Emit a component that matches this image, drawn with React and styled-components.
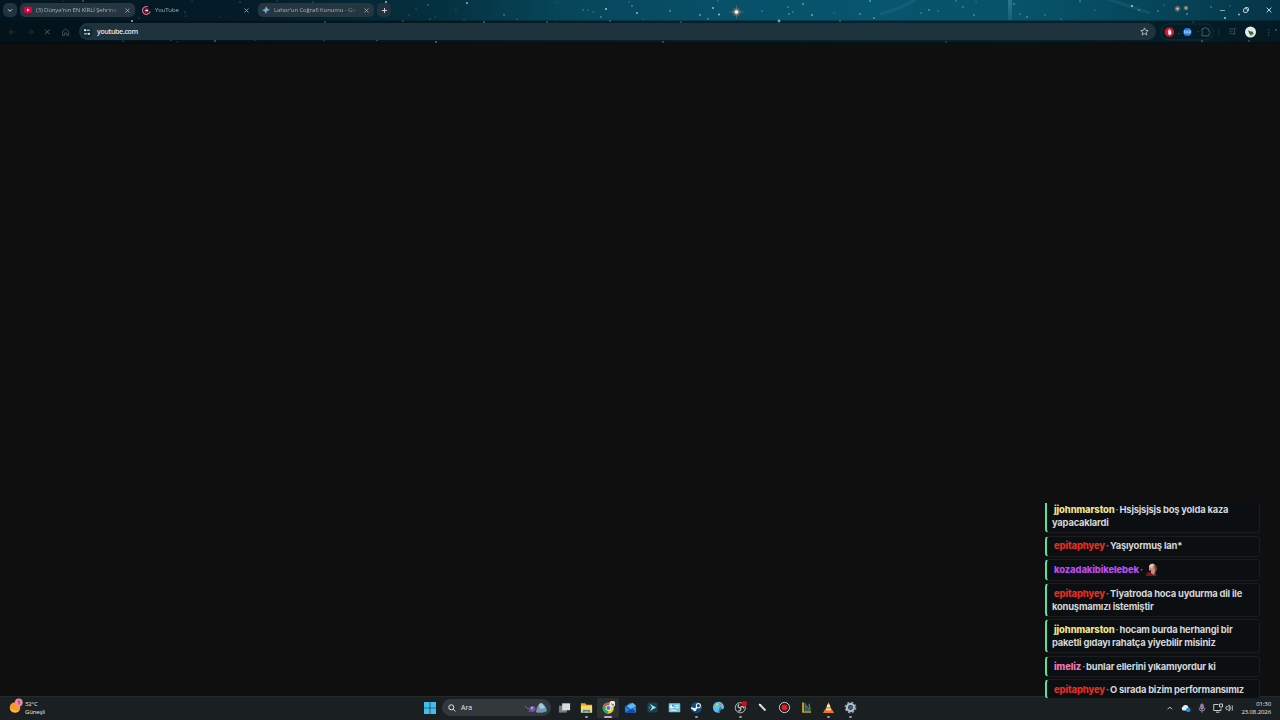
import React from 'react';
import styled, { createGlobalStyle } from 'styled-components';

const messages = [
  { user: 'jjohnmarston', color: '#eee58c', lines: ['Hsjsjsjsjs boş yolda kaza', 'yapacaklardi'], h: 34 },
  { user: 'epitaphyey', color: '#e63022', lines: ['Yaşıyormuş lan*'], h: 21 },
  { user: 'kozadakibikelebek', color: '#bd4df0', lines: [], emote: true, h: 22 },
  { user: 'epitaphyey', color: '#e63022', lines: ['Tiyatroda hoca uydurma dil ile', 'konuşmamızı istemiştir'], h: 34 },
  { user: 'jjohnmarston', color: '#eee58c', lines: ['hocam burda herhangi bir', 'paketli gıdayı rahatça yiyebilir misiniz'], h: 34 },
  { user: 'imeliz', color: '#f078bd', lines: ['bunlar ellerini yıkamıyordur ki'], h: 21 },
  { user: 'epitaphyey', color: '#e63022', lines: ['O sırada bizim performansımız'], h: 20 },
];

// x, y, radius, opacity
const stars = [
  [22, 2, 0.5, 0.4], [63, 1, 0.5, 0.4], [83, 1, 0.8, 0.6], [132, 21, 1, 0.9], [139, 18, 0.6, 0.5],
  [123, 41, 0.6, 0.6], [171, 40, 0.7, 0.6], [177, 42, 0.6, 0.4], [185, 12, 0.6, 0.6], [186, 16, 0.5, 0.5],
  [192, 1, 0.6, 0.4], [215, 41, 0.8, 0.7], [220, 17, 0.5, 0.4], [240, 2, 0.6, 0.6], [255, 40, 0.6, 0.5],
  [277, 1, 0.6, 0.5], [313, 2, 0.6, 0.6], [325, 22, 0.8, 0.5], [324, 40, 0.7, 0.5], [377, 40, 0.8, 0.6],
  [386, 2, 1, 0.9], [403, 21, 0.7, 0.5], [409, 15, 0.6, 0.5], [416, 9, 0.6, 0.5], [428, 5, 0.7, 0.6],
  [430, 19, 0.6, 0.6], [435, 17, 0.5, 0.4], [436, 42, 0.9, 0.5], [456, 10, 0.5, 0.5], [464, 20, 0.6, 0.5],
  [467, 3, 0.9, 0.9], [484, 22, 0.8, 0.7], [504, 15, 0.8, 0.6], [517, 19, 0.6, 0.6], [547, 22, 0.7, 0.6],
  [555, 23, 0.6, 0.5], [557, 2, 0.5, 0.4], [583, 10, 0.7, 0.6], [588, 10, 0.6, 0.7], [593, 12, 0.6, 0.7],
  [601, 17, 0.7, 0.8], [606, 9, 1, 0.9], [610, 21, 0.7, 0.7], [629, 2, 0.6, 0.6], [632, 6, 0.7, 0.8],
  [637, 13, 1, 0.8], [643, 19, 0.5, 0.5], [670, 11, 0.8, 0.8], [681, 22, 0.7, 0.6], [700, 15, 1, 0.6],
  [708, 19, 0.8, 0.7], [713, 8, 1, 0.8], [719, 14.5, 1, 0.9], [718, 1, 0.6, 0.7], [762, 11, 0.7, 0.6],
  [779, 21, 1.4, 0.7], [788, 7, 0.7, 0.7], [789, 14, 0.8, 0.7], [793, 12, 0.7, 0.6], [803, 4, 0.9, 0.6],
  [812, 15, 0.9, 0.7], [834, 13, 0.6, 0.5], [840, 21, 0.7, 0.7], [860, 14, 0.8, 0.7], [870, 1, 0.8, 0.9],
  [874, 18, 0.8, 0.8], [921, 13, 0.7, 0.6], [929, 10, 0.8, 0.8], [938, 11, 0.6, 0.8], [663, 42, 0.9, 0.4],
  [946, 42, 0.8, 0.4], [956, 1, 0.7, 0.6], [963, 7, 0.7, 0.7], [974, 15, 0.8, 0.7], [976, 2, 0.6, 0.6],
  [1014, 4, 0.7, 0.8], [1020, 14, 0.8, 0.6], [1027, 17, 0.8, 0.7], [1045, 15, 0.7, 0.6], [1061, 19, 0.6, 0.7],
  [1080, 1, 0.7, 0.7], [1095, 10, 0.5, 0.7], [1132, 6, 1, 1], [1139, 10, 0.7, 0.7], [1158, 11, 0.7, 0.8],
  [1164, 5, 0.6, 0.6], [1187, 14, 0.8, 0.8], [1193, 22, 0.6, 0.6], [1202, 41, 0.9, 0.5], [1211, 7, 0.7, 0.7],
  [1225, 18, 1, 0.9], [1230, 6, 0.6, 0.6], [1239, 14.5, 0.9, 0.9], [1249, 41, 0.8, 0.5], [1276, 30, 0.8, 0.6],
];

const Cross = ({ size = 5 }) => (
  <svg width={size} height={size} viewBox="0 0 6 6" stroke="currentColor" strokeWidth="0.9">
    <path d="M.6.6 5.4 5.4M5.4.6.6 5.4" />
  </svg>
);

const NightSky = () => (
  <Sky viewBox="0 0 1280 44">
    <defs>
      <radialGradient id="glow">
        <stop offset="0" stopColor="#ffe9c9" />
        <stop offset="0.4" stopColor="#e0a070" stopOpacity="0.6" />
        <stop offset="1" stopColor="#a98d70" stopOpacity="0" />
      </radialGradient>
      <linearGradient id="beam" x2="0" y2="1">
        <stop offset="0" stopColor="#7ac0cf" stopOpacity="0.32" />
        <stop offset="1" stopColor="#7ac0cf" stopOpacity="0.12" />
      </linearGradient>
    </defs>
    <path d="M880 14 Q900 9 915 0M1105-2 1150 13" stroke="#459cb0" strokeOpacity=".16" strokeWidth="3" fill="none" />
    <rect x="1008" width="4" height="20" fill="url(#beam)" />
    {stars.map(([x, y, r, o]) => (
      <circle key={`${x}-${y}`} cx={x} cy={y} r={r} fill="#a9d8dc" opacity={o} />
    ))}
    <circle cx="736.5" cy="12" r="5" fill="url(#glow)" />
    <path d="M736.5 5v14M729 12h15" stroke="#cfa889" strokeOpacity=".45" strokeWidth=".6" />
    <circle cx="736.5" cy="12" r="1.8" fill="#fff2da" />
    <circle cx="1177.5" cy="8.7" r="3.6" fill="url(#glow)" />
    <circle cx="1186" cy="8" r="3" fill="url(#glow)" />
  </Sky>
);

const Tools = () => (
  <ToolIcons viewBox="0 0 120 20" fill="none">
    <rect x="1" y="2" width="52.5" height="16" rx="8" stroke="#123340" strokeWidth=".8" />
    <path d="M7.4 5.5h4L14 8.2v3.8l-2.6 2.7h-4l-2.6-2.7V8.2z" fill="#d3132d" />
    <path d="M8.1 9.5h2.9v2.2l-1 1H9zM8.5 9.5V7.7M9.6 9.5V7.2M10.7 9.5V7.9" fill="#fff" stroke="#fff" strokeWidth=".7" />
    <circle cx="27.4" cy="10" r="4.1" fill="#247de5" />
    <path d="M27.4 10c-.8-1-1.3-1.3-1.8-1.3a1.2 1.2 0 0 0 0 2.5c.5 0 1-.3 1.8-1.2s1.3-1.3 1.8-1.3a1.2 1.2 0 0 1 0 2.5c-.5 0-1-.3-1.8-1.2z" stroke="#d9eaff" strokeWidth=".8" />
    <path d="M18 11.5h1M20.5 11.5h1M37.5 9.7h1.5" stroke="#31515b" />
    <path d="M42 6.8h2a1.4 1.4 0 0 1 2.8 0h2v2.5a1.3 1.3 0 0 1 0 2.6v2H42v-2.4a1.3 1.3 0 0 0 0-2.2z" stroke="#465e68" strokeWidth="1" />
    <path d="M58.8 7v6" stroke="#163743" />
    <path d="M69 6.7h5M69 9h4M69 11.3h2.7M74.5 12V6.8h2" stroke="#344f5a" strokeWidth=".9" />
    <circle cx="73.6" cy="12" r="1.1" fill="#344f5a" />
    <circle cx="90.5" cy="10" r="5.5" fill="#e2ece7" />
    <path d="m88 8 2.3 1.6 1.700-.4 1.600 2-1.100 2.100-2 .3-1.500-2.600z" fill="#3c5b45" />
    <path d="M90.500 13l3-.8" stroke="#7eb35e" strokeWidth="1" />
    <path d="M108.7 7v1M108.7 9.7v1M108.7 12.4v1" stroke="#48616c" strokeWidth="1.1" />
  </ToolIcons>
);

const appIcons = {
  taskview: (
    <>
      <rect x="1" y="5" width="8.5" height="7.5" fill="#777c80" />
      <rect x="4.5" y="2.5" width="8.5" height="7.5" fill="#d9dcde" />
    </>
  ),
  files: (
    <>
      <path d="M1 2.5h4.5L7 4h6v8.5H1z" fill="#e9a925" />
      <path d="M1 5h12v7.5H1z" fill="#ffd85b" />
      <path d="M3 9.5h8v3H3z" fill="#368dce" />
      <path d="M5 11.3h4v1.2H5z" fill="#e8c65b" />
    </>
  ),
  chrome: (
    <>
      <circle cx="6.8" cy="7.6" r="6" fill="#f6c928" />
      <path d="M6.8 7.6 1.6 4.6a6 6 0 0 1 10.4 0z" fill="#e34a3c" />
      <path d="M6.8 7.6 1.6 4.6a6 6 0 0 0 5.2 9z" fill="#36a852" />
      <circle cx="6.8" cy="7.6" r="2.9" fill="#fff" />
      <circle cx="6.8" cy="7.6" r="2.2" fill="#3682e5" />
      <circle cx="11.2" cy="3.1" r="3.3" fill="#e5ece7" />
      <path d="m9.5 2.2 2.3 1.5 1.3-.7-.8 2-1.5-.3z" fill="#45684e" />
    </>
  ),
  mail: (
    <>
      <path d="m1 6 6-4.5L13 5v7.2H1z" fill="#2461bd" />
      <path d="M3 5.5 9.5 2l3.5 3-5.5 4z" fill="#61b9ef" />
      <path d="m1 6.5 6 3.8 6-4.8v6.8H2z" fill="#1f86e3" />
      <path d="M1 12.3 9 8l4 4.3z" fill="#174b9b" />
    </>
  ),
  filmora: (
    <>
      <rect x="1.5" y="1.5" width="11" height="11" rx="2" fill="#1b3f4f" />
      <path d="m4 3 3.500 2L11 7l-3.500 2L4 11l2.500-4z" fill="#8cece0" />
      <path d="m3 5.500 2 1.500-2 1.500z" fill="#3e97a0" />
    </>
  ),
  panel: (
    <>
      <rect x=".8" y="2.3" width="12.4" height="9.8" rx=".8" fill="#73c8ed" />
      <circle cx="4.2" cy="6" r="2.1" fill="#eefaff" />
      <path d="M4.2 6V3.9A2.1 2.1 0 0 1 6.3 6z" fill="#367cb5" />
      <path d="M8 5h3.5M8 7h3.5M3 10h7" stroke="#edf9ff" />
      <path d="M10 8v3" stroke="#eaa341" strokeWidth="1.4" />
    </>
  ),
  steam: (
    <>
      <circle cx="7" cy="7" r="6" fill="#174a76" />
      <path d="m1.3 7.5 4 1.8L8.2 6" stroke="#e8f3fa" strokeWidth="2" fill="none" />
      <circle cx="9" cy="5" r="2.2" stroke="#e8f3fa" strokeWidth="1.1" fill="#174a76" />
      <circle cx="5.1" cy="9.5" r="1.6" fill="#e8f3fa" />
    </>
  ),
  paint: (
    <>
      <path d="M1 7a6 6 0 0 1 12-.5c0 2.500-2 2.500-3.500 2.500-1.500 0-1.500 1-1 2 .3 1.200-.8 1.800-2.300 1.700A6 6 0 0 1 1 7z" fill="#58bfe7" />
      <circle cx="5.5" cy="3.9" r="1.2" fill="#f1d65a" />
      <circle cx="9" cy="3.9" r="1.2" fill="#e6734c" />
      <circle cx="3.7" cy="6.8" r="1.2" fill="#83d376" />
      <path d="m9.500 6.500-2 6" stroke="#287bb5" strokeWidth="1.8" />
    </>
  ),
  obs: (
    <>
      <circle cx="6.8" cy="7.3" r="5.5" fill="#24272a" stroke="#d0d2d3" strokeWidth=".9" />
      <path d="M6.5 7.5C3.6 7 4 4.5 5.5 3.8M7 7.2c1.2-2.3 3.5-1 3.8.8M6.8 7.5c1.4 2.1-.6 3.9-2.4 3" stroke="#c5c7c8" strokeWidth="1.3" fill="none" />
      <circle cx="11.2" cy="2.8" r="2.8" fill="#d90716" />
    </>
  ),
  pen: (
    <>
      <path d="m4.2 4 6 6.2" stroke="#d8dcde" strokeWidth="2.2" />
      <path d="m3.4 3.2 1.6 1.6" stroke="#f8f8f8" strokeWidth="1.8" />
    </>
  ),
  record: (
    <>
      <circle cx="7" cy="7" r="5.5" fill="#191c1d" stroke="#dfdfdf" strokeWidth="1" />
      <circle cx="7" cy="7" r="3.2" fill="#ef1722" />
    </>
  ),
  ruler: (
    <>
      <path d="M2.2 1.5h2.4v9.5H12v1.7H2.2z" fill="#c69a36" />
      <path d="M5.4 2v8.5h6.4z" fill="#247d75" />
      <path d="M7 7v2h2z" fill="#182d2d" />
      <path d="m9.5 3 1.6 6" stroke="#b58949" />
    </>
  ),
  vlc: (
    <>
      <path d="M3 9.5h8l2 3.3H1z" fill="#e8791c" />
      <path d="M7 1 3.4 10.2Q7 12 10.6 10.2z" fill="#f58a24" />
      <path d="m5.9 3.8-.9 2.3q2 1 4 0l-.9-2.3zM4.4 7.7l-.5 1.5q3.1 1.6 6.2 0l-.5-1.5Q7 9.2 4.4 7.7z" fill="#edebe6" />
    </>
  ),
  settings: (
    <>
      <circle cx="7" cy="7" r="5.4" fill="none" stroke="#8799a3" strokeWidth="1.9" strokeDasharray="2.5 1.74" />
      <circle cx="7" cy="7" r="3.8" fill="none" stroke="#b4bfc5" strokeWidth="2.3" />
      <circle cx="7" cy="7" r="2.2" fill="#2a6099" />
    </>
  ),
};

// running: small dot below the icon, active: wider highlighted bar
const apps = [
  ['taskview'], ['files', 'running'], ['chrome', 'active'], ['mail'], ['filmora'], ['panel'],
  ['steam', 'running'], ['paint'], ['obs', 'running'], ['pen'], ['record'], ['ruler'], ['vlc', 'running'], ['settings', 'running'],
];

export default function App() {
  return (
    <Desktop>
      <GlobalStyle />
      <Browser>
        <NightSky />
        <TabStrip>
          <RoundButton>
            <svg width="6" height="5" viewBox="0 0 6 5" fill="none" stroke="currentColor"><path d="m1 1.3 2 2 2-2" /></svg>
          </RoundButton>
          <Tab $width={115} $gap={3} $filled>
            <svg width="8" height="8" viewBox="0 0 8 8"><rect y=".8" width="8" height="6.3" rx="1.8" fill="#e4003c" /><path d="m3 2.5 2.7 1.5L3 5.5z" fill="#fff" /></svg>
            <TabTitle $spacing={-0.13}>(3) Dünya'nın EN KİRLİ Şehrine</TabTitle>
            <Cross />
          </Tab>
          <Tab $width={116} $gap={3}>
            <svg width="9" height="9" viewBox="0 0 9 9" fill="none"><circle cx="4.5" cy="4.5" r="2.2" fill="#d80f40" /><path d="M5.8.8a3.9 3.9 0 1 0 2.4 4.6" stroke="#e56e93" strokeWidth="1.1" /><path d="M3.5 4.5H6" stroke="#fff" strokeWidth="1.2" /></svg>
            <TabTitle $spacing={-0.15}>YouTube</TabTitle>
            <Cross />
          </Tab>
          <Tab $width={116} $gap={4} $filled>
            <svg width="8" height="8" viewBox="0 0 8 8"><path d="M4 0q.7 3.3 4 4-3.3.7-4 4-.7-3.3-4-4Q3.3 3.3 4 0z" fill="#4b94f2" /><path d="M4 0q.7 3.3 4 4H4z" fill="#a1c768" /><path d="M0 4h4v4Q3.3 4.7 0 4z" fill="#64bad0" /></svg>
            <TabTitle $spacing={-0.11}>Lahor'un Coğrafi Konumu - Go</TabTitle>
            <Cross />
          </Tab>
          <RoundButton $left={3}>
            <svg width="7" height="7" viewBox="0 0 7 7" stroke="currentColor"><path d="M3.5 1v5M1 3.5h5" /></svg>
          </RoundButton>
          <WindowControls>
            <svg width="7" height="7" viewBox="0 0 7 7" stroke="#8badb8"><path d="M1 3.5h5" /></svg>
            <svg width="6" height="6" viewBox="0 0 6 6" stroke="currentColor" fill="none" strokeWidth=".9"><rect x=".6" y="1.7" width="3.7" height="3.7" rx=".6" /><path d="M2 .6h2.7q.7 0 .7.7V4" /></svg>
            <Cross size={6} />
          </WindowControls>
        </TabStrip>
        <Toolbar>
          <NavIcons viewBox="0 0 76 16" fill="none" stroke="#42545d" strokeWidth=".9">
            <path d="M15 8H9.5M12 5.3 9.3 8l2.7 2.7" stroke="#402d37" />
            <path d="M27.5 8H33M30.5 5.3 33.2 8l-2.7 2.7" stroke="#21333c" />
            <path d="m45 5.6 4.6 4.6M49.6 5.6 45 10.2" stroke="#56666e" />
            <path d="M62.5 7.4 65.6 5l3.1 2.4v4h-2V9h-2.2v2.4h-2z" />
          </NavIcons>
          <AddressBar>
            <SiteInfo viewBox="0 0 12 12" fill="none">
              <circle cx="6" cy="6" r="6" fill="#102a36" />
              <path d="M3 4.2h1.5M5.5 4.2H9M3 7.8h3.5M8 7.8h1" stroke="#dce5e9" strokeWidth="1" />
              <circle cx="4" cy="4.2" r="1.1" fill="#dce5e9" />
              <circle cx="7.9" cy="7.8" r="1.1" fill="#dce5e9" />
            </SiteInfo>
            <Address>youtube.com</Address>
            <svg width="9" height="9" viewBox="0 0 10 10" fill="none" stroke="#c4d0d5" strokeWidth=".9"><path d="m5 1 1.2 2.7 2.9.3-2.2 1.9.7 2.9L5 7.3 2.4 8.8l.7-2.9L.9 4l2.9-.3z" /></svg>
          </AddressBar>
          <Tools />
        </Toolbar>
      </Browser>

      <PageArea />

      <Taskbar>
        <Weather>
          <svg width="15" height="16" viewBox="0 0 15 16">
            <circle cx="6" cy="9.5" r="5.3" fill="#f59b25" />
            <path d="M1 10a5.3 5.3 0 0 0 9.5 2Q5 14 1 10z" fill="#ffc247" />
            <circle cx="9.8" cy="4.5" r="3.9" fill="#ef87a8" />
            <path d="m9 3.6 1.1-.8v3.7" stroke="#592437" fill="none" strokeWidth=".8" />
          </svg>
          <WeatherText>
            <span>32°C</span>
            <span>Güneşli</span>
          </WeatherText>
        </Weather>
        <Center>
          <svg width="12" height="12" viewBox="0 0 12 12" fill="#42bdec"><path d="M0 0h5.7v5.7H0zM6.3 0H12v5.7H6.3zM0 6.3h5.7V12H0zM6.3 6.3H12V12H6.3z" /></svg>
          <Search>
            <svg width="8" height="8" viewBox="0 0 8 8" fill="none" stroke="#e3e6e7" strokeWidth="1"><circle cx="3.3" cy="3.3" r="2.5" /><path d="m5.2 5.2 2.2 2.2" /></svg>
            <span>Ara</span>
            <svg width="24" height="14" viewBox="0 0 24 14">
              <path d="m1 5 3 3 4-1M5 11l2-3" stroke="#74858d" fill="none" strokeWidth=".8" />
              <circle cx="8.5" cy="8" r="3" fill="#7654ae" />
              <circle cx="8" cy="7" r="1.2" fill="#b89cdc" />
              <path d="M12 11q1-8 5-9 5 2 6 8-4 3-11 1z" fill="#659ebd" />
              <path d="m15 3 1 5 5-1-3-5z" fill="#a9cbd9" />
              <path d="m14 7-2 4 3 1z" fill="#c7739b" />
            </svg>
          </Search>
          <Apps>
            {apps.map(([name, state]) => (
              <AppButton key={name} $state={state}>
                <svg width="13" height="13" viewBox="0 0 14 14">{appIcons[name]}</svg>
              </AppButton>
            ))}
          </Apps>
        </Center>
        <Tray>
          <svg width="68" height="14" viewBox="0 0 68 14" fill="none" stroke="#d9dddf" strokeWidth=".9">
            <path d="m2.5 8.3 2.3-2.3 2.3 2.3" />
            <path d="M18 9.5a2.2 2.2 0 0 1 0-4 3 3 0 0 1 5.5 1v3z" fill="#e5edf1" stroke="none" />
            <circle cx="23.3" cy="9" r="2.3" fill="#188fdd" stroke="none" />
            <rect x="35.7" y="3" width="2.6" height="5.2" rx="1.3" fill="#9b73a7" stroke="#a58aac" />
            <path d="M34.2 6.5v.7a2.8 2.8 0 0 0 5.6 0v-.7M37 10v1.7" stroke="#a58aac" />
            <path d="M53.5 3.5H48.7v6h7.3V7.5M51 11.2h3.5M54.5 3h3v3h-3z" />
            <path d="M61 5.8h1.4l1.9-1.9v6.2l-1.9-1.9H61zM65.5 5.5q1 1.5 0 3M67 4.3q1.8 2.7 0 5.4" strokeWidth=".8" />
          </svg>
          <Clock>
            <span>01:30</span>
            <span>23.08.2026</span>
          </Clock>
        </Tray>
      </Taskbar>

      <Chat>
        {messages.map((message, i) => (
          <Message key={i} $height={message.h}>
            <User $color={message.color}>{message.user}</User>
            <Dot>·</Dot>
            {message.emote && (
              <Emote viewBox="0 0 13 14">
                <path d="M1 13q0-4 4-4l4-1 3 5z" fill="#7b171c" />
                <path d="M4 4q1-4 5-3 3 2 2 7l-2 4-3-2V7L4 8z" fill="#c98f7c" />
                <path d="M4 4q1-4 5-3l-2 4z" fill="#e4c3b3" />
                <path d="m9 3 1 5-2 4 3-3q2-5-1-7z" fill="#75463e" />
              </Emote>
            )}
            {message.lines[0]}
            {message.lines[1] && <Line>{message.lines[1]}</Line>}
          </Message>
        ))}
      </Chat>
    </Desktop>
  );
}

// styled-components
const GlobalStyle = createGlobalStyle`
  * { box-sizing: border-box; }
  body { margin: 0; background: #0f0f0f; overflow: hidden; }
  svg { display: block; flex-shrink: 0; }
`;

const Desktop = styled.div`
  position: relative;
  width: 1280px;
  height: 720px;
  display: flex;
  flex-direction: column;
  overflow: hidden;
  background: #0f0f0f;
  font-family: 'Open Sans', 'Noto Sans', sans-serif;
`;

const Browser = styled.header`
  position: relative;
  height: 44px;
  flex-shrink: 0;
  background:
    linear-gradient(180deg, transparent 20px, rgba(3, 18, 25, 0.78) 21px, rgba(3, 18, 25, 0.78) 41px, rgba(8, 11, 13, 0.93) 43px),
    linear-gradient(90deg, #031620 0%, #041d29 20%, #04303f 34%, #07465a 44%, #075068 56%, #06566d 68%, #075369 80%, #064357 92%, #053447 100%);
`;

const Sky = styled.svg`
  position: absolute;
  inset: 0;
  width: 1280px;
  height: 44px;
`;

const TabStrip = styled.div`
  position: relative;
  display: flex;
  align-items: center;
  height: 20px;
  padding: 0 8px 0 3px;
`;

const RoundButton = styled.div`
  width: 14px;
  height: 14px;
  margin-left: ${({ $left = 0 }) => $left}px;
  border-radius: 5px;
  display: flex;
  align-items: center;
  justify-content: center;
  color: #cad5da;
  background: #21333f;
`;

const Tab = styled.div`
  width: ${({ $width }) => $width}px;
  height: 14px;
  margin-left: ${({ $gap }) => $gap}px;
  padding: 0 5px 0 4px;
  display: flex;
  align-items: center;
  gap: 4px;
  border-radius: 5px;
  color: #adb9be;
  background: ${({ $filled }) => ($filled ? '#253640' : 'transparent')};
`;

const TabTitle = styled.span`
  flex: 1;
  min-width: 0;
  overflow: hidden;
  white-space: nowrap;
  font-size: 6px;
  line-height: 10px;
  letter-spacing: ${({ $spacing = 0 }) => $spacing}px;
  color: #a3b0b6;
  mask-image: linear-gradient(90deg, #000 82%, transparent);
`;

const WindowControls = styled.div`
  margin-left: auto;
  display: flex;
  align-items: center;
  gap: 17px;
  color: #dce8ed;
`;

const Toolbar = styled.div`
  position: relative;
  display: flex;
  align-items: center;
  height: 23px;
`;

const NavIcons = styled.svg`
  width: 76px;
  height: 16px;
`;

const AddressBar = styled.div`
  width: 1077px;
  height: 17px;
  margin-left: 3px;
  padding: 0 7px 0 2px;
  border-radius: 9px;
  display: flex;
  align-items: center;
  background: #1f333f;
`;

const SiteInfo = styled.svg`
  width: 12px;
  height: 12px;
`;

const Address = styled.span`
  flex: 1;
  margin-left: 4px;
  color: #e2e8eb;
  font-size: 7px;
  font-weight: 600;
  letter-spacing: -0.32px;
  line-height: 12px;
`;

const ToolIcons = styled.svg`
  width: 120px;
  height: 20px;
  margin-left: 4px;
`;

const PageArea = styled.main`
  flex: 1;
  background: #0f0f0f;
`;

const Taskbar = styled.footer`
  position: relative;
  display: flex;
  height: 24px;
  padding-bottom: 2px;
  border-top: 1px solid #25292a;
  background: #1a2022;
  color: #e6e8e9;
`;

const Weather = styled.div`
  display: flex;
  width: 424px;
  padding: 1px 0 0 9px;
  gap: 1px;
`;

const WeatherText = styled.div`
  display: flex;
  flex-direction: column;
  padding-top: 1.5px;
  font-size: 6px;
  line-height: 8px;
  letter-spacing: -0.15px;
`;

const Center = styled.div`
  display: flex;
  align-items: center;
`;

const Search = styled.div`
  width: 109px;
  height: 17px;
  margin-left: 6px;
  padding: 0 3px 0 6px;
  border-radius: 9px;
  display: flex;
  align-items: center;
  background: #33393b;
  font-size: 7px;

  span {
    flex: 1;
    margin-left: 5px;
  }
`;

const Apps = styled.div`
  display: flex;
  margin-left: 2px;
`;

const AppButton = styled.div`
  position: relative;
  display: flex;
  align-items: center;
  justify-content: center;
  width: 22px;
  height: 20px;
  border-radius: 2px;
  background: ${({ $state }) => ($state === 'active' ? '#293134' : 'transparent')};

  &::after {
    content: '';
    display: ${({ $state }) => ($state ? 'block' : 'none')};
    position: absolute;
    bottom: 0;
    width: ${({ $state }) => ($state === 'active' ? 8 : 3)}px;
    height: 1.5px;
    border-radius: 1px;
    background: ${({ $state }) => ($state === 'active' ? '#c6a2ce' : '#91999d')};
  }
`;

const Tray = styled.div`
  margin-left: auto;
  padding: 0 9px 0 0;
  display: flex;
  align-items: center;
  gap: 3px;
`;

const Clock = styled.div`
  display: flex;
  flex-direction: column;
  align-items: flex-end;
  width: 35px;
  font-size: 6px;
  line-height: 8px;
  letter-spacing: -0.1px;
`;

const Chat = styled.aside`
  position: absolute;
  top: 503px;
  right: 20px;
  width: 215px;
  height: 196px;
  display: flex;
  flex-direction: column;
  justify-content: flex-end;
  gap: 2.3px;
  overflow: hidden;
`;

const Message = styled.div`
  flex-shrink: 0;
  height: ${({ $height }) => $height}px;
  padding: 2.8px 0 0 5px;
  border: 1px solid #1b1e20;
  border-left: 2px solid #52e39c;
  border-radius: 4px;
  background: #0c0f11;
  color: #d4d6d8;
  font-family: Inter, 'Noto Sans', sans-serif;
  font-size: 9.4px;
  font-weight: 650;
  letter-spacing: -0.2px;
  line-height: 13px;
  white-space: nowrap;
`;

const User = styled.span`
  margin-left: 2px;
  color: ${({ $color }) => $color};
  font-weight: 800;
  letter-spacing: -0.1px;
`;

const Dot = styled.span`
  margin: 0 1px;
  color: #85898c;
`;

const Line = styled.div`
  height: 13px;
`;

const Emote = styled.svg`
  display: inline-block;
  width: 13px;
  height: 14px;
  margin-left: 1px;
  vertical-align: -4px;
`;
